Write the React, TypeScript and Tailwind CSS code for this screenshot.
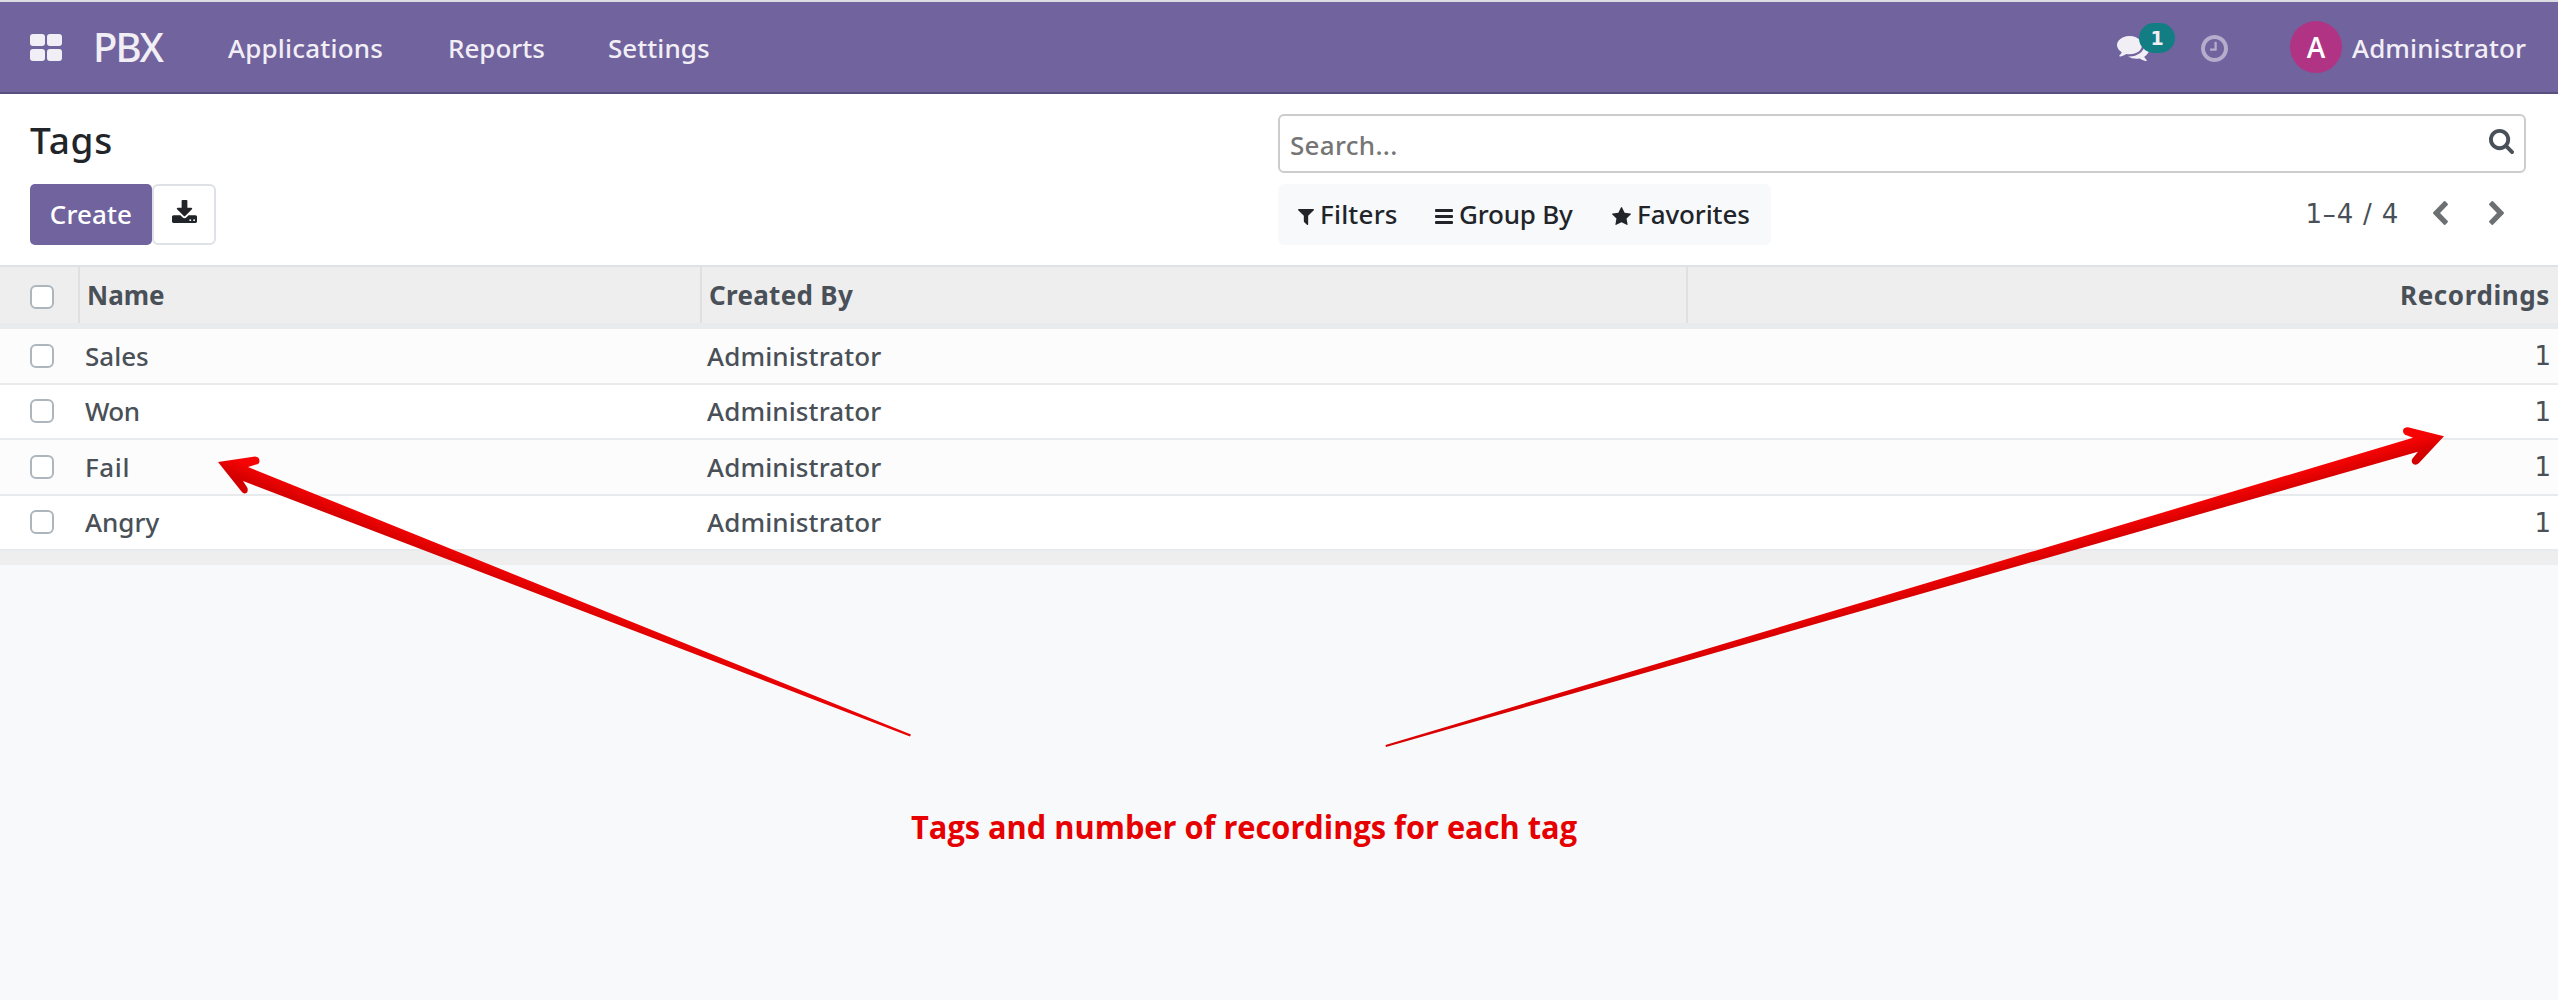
import type { ReactNode } from "react";

type IconProps = { box: string; d: string; className: string };

function Icon({ box, d, className }: IconProps) {
  return (
    <svg viewBox={box} preserveAspectRatio="none" fill="currentColor" className={`block shrink-0 ${className}`}>
      <path d={d} />
    </svg>
  );
}

const COMMENTS =
  "M1408 768q0 139-94 257t-256.5 186.5-353.5 68.5q-86 0-176-16-124 88-278 128-36 9-86 16h-3q-11 0-20.5-8t-11.5-21q-1-3-1-6.5t.5-6.5 2-6l2.5-5 3.5-5.5 4-5 4.5-5 4-4.5q5-6 23-25t26-29.5 22.5-29 25-38.5 20.5-44q-124-72-195-177t-71-224q0-139 94-257t256.5-186.5 353.5-68.5 353.5 68.5 256.5 186.5 94 257zm384 256q0 120-71 224.5t-195 176.5q10 24 20.5 44t25 38.5 22.5 29 26 29.5 23 25q1 1 4 4.5t4.5 5 4 5 3.5 5.5l2.5 5 2 6 .5 6.5-1 6.5q-3 14-13 22t-22 7q-50-7-86-16-154-40-278-128-90 16-176 16-271 0-472-132 58 4 88 4 161 0 309-45t264-129q125-92 192-212t67-254q0-77-23-152 129 71 204 178t75 230z";
const CLOCK =
  "M1024 544v448q0 14-9 23t-23 9h-320q-14 0-23-9t-9-23v-64q0-14 9-23t23-9h224v-352q0-14 9-23t23-9h64q14 0 23 9t9 23zm416 352q0-148-73-273t-198-198-273-73-273 73-198 198-73 273 73 273 198 198 273 73 273-73 198-198 73-273zm224 0q0 209-103 385.5t-279.5 279.5-385.5 103-385.5-103-279.5-279.5-103-385.5 103-385.5 279.5-279.5 385.5-103 385.5 103 279.5 279.5 103 385.5z";
const SEARCH =
  "M1216 832q0-185-131.5-316.5t-316.5-131.5-316.5 131.5-131.5 316.5 131.5 316.5 316.5 131.5 316.5-131.5 131.5-316.5zm512 832q0 52-38 90t-90 38q-54 0-90-38l-343-342q-179 124-399 124-143 0-273.5-55.5t-225-150-150-225-55.5-273.5 55.5-273.5 150-225 225-150 273.5-55.5 273.5 55.5 225 150 150 225 55.5 273.5q0 220-124 399l343 343q37 37 37 90z";
const DOWNLOAD =
  "M1344 1344q0-26-19-45t-45-19-45 19-19 45 19 45 45 19 45-19 19-45zm256 0q0-26-19-45t-45-19-45 19-19 45 19 45 45 19 45-19 19-45zm128-224v320q0 40-28 68t-68 28h-1472q-40 0-68-28t-28-68v-320q0-40 28-68t68-28h465l135 136q58 56 136 56t136-56l136-136h464q40 0 68 28t28 68zm-325-569q17 41-14 70l-448 448q-18 19-45 19t-45-19l-448-448q-31-29-14-70 17-39 59-39h256v-448q0-26 19-45t45-19h256q26 0 45 19t19 45v448h256q42 0 59 39z";
const FILTER =
  "M1595 295q17 41-14 70l-493 493v742q0 42-39 59-13 5-25 5-27 0-45-19l-256-256q-19-19-19-45v-486l-493-493q-31-29-14-70 17-39 59-39h1280q42 0 59 39z";
const STAR =
  "M1728 647q0 22-26 48l-363 354 86 500q1 7 1 20 0 21-10.5 35.5t-30.5 14.5q-19 0-40-12l-449-236-449 236q-22 12-40 12-21 0-31.5-14.5t-10.5-35.5q0-6 2-20l86-500-364-354q-25-27-25-48 0-37 56-46l502-73 225-455q19-41 49-41t49 41l225 455 502 73q56 9 56 46z";
const CHEVRON_LEFT =
  "M1427 301l-531 531 531 531q19 19 19 45t-19 45l-166 166q-19 19-45 19t-45-19l-742-742q-19-19-19-45t19-45l742-742q19-19 45-19t45 19l166 166q19 19 19 45t-19 45z";
const CHEVRON_RIGHT =
  "M1363 877l-742 742q-19 19-45 19t-45-19l-166-166q-19-19-19-45t19-45l531-531-531-531q-19-19-19-45t19-45l166-166q19-19 45-19t45 19l742 742q19 19 19 45t-19 45z";

function Navbar() {
  return (
    <header className="flex h-[94px] items-center border-t-2 border-b-2 border-t-[#dcdce3] border-b-[#5a4f7f] bg-[#71639e] pr-8 pl-[30px] text-[#f1eff5]">
      <div className="grid grid-cols-[15px_15px] grid-rows-[12px_12px] gap-x-[2px] gap-y-[3px]">
        <i className="rounded-[3px] bg-[#f1eff5]" />
        <i className="rounded-[3px] bg-[#f1eff5]" />
        <i className="rounded-[3px] bg-[#f1eff5]" />
        <i className="rounded-[3px] bg-[#f1eff5]" />
      </div>
      <div className="ml-[31px] w-[135px] text-[40px] leading-[60px] tracking-[-2px]">PBX</div>
      <nav className="flex pt-px">
        <a className="w-[220px] tracking-[0.2px]">Applications</a>
        <a className="w-[160px]">Reports</a>
        <a className="tracking-[0.05px]">Settings</a>
      </nav>
      <div className="ml-auto flex items-center">
        <div className="relative mr-[52px]">
          <Icon box="0 256 1792 1408" d={COMMENTS} className="mt-[3px] h-[25px] w-8" />
          <span className="absolute -top-[10px] left-[22px] flex h-[30px] w-9 items-center justify-center rounded-full bg-[#127e84] font-['DejaVu_Sans'] text-[19px] leading-none font-bold">
            1
          </span>
        </div>
        <Icon box="128 128 1536 1536" d={CLOCK} className="mt-0.5 mr-[62px] h-[27px] w-[27px] text-[#b5adcb]" />
        <div className="flex h-[52px] w-[52px] items-center justify-center rounded-full bg-[#b13383] font-['Open_Sans'] text-[28px] font-semibold text-white">
          A
        </div>
        <span className="ml-[10px] pt-px tracking-[0.08px]">Administrator</span>
      </div>
    </header>
  );
}

function SearchOption({ icon, children, className }: { icon: ReactNode; children: ReactNode; className: string }) {
  return (
    <button className={`flex items-center whitespace-nowrap text-[#212529] ${className}`}>
      {icon}
      <span className="-mt-px">{children}</span>
    </button>
  );
}

function ControlPanel() {
  return (
    <section className="flex h-[171px] bg-white pt-5 pr-8 pl-[30px]">
      <div className="w-[1248px]">
        <h1 className="h-[70px] text-[37px] leading-[51px] tracking-[0.8px] text-[#212529]">Tags</h1>
        <div className="flex">
          <button className="h-[61px] w-[122px] rounded-[5px] bg-[#71639e] pb-[2px] tracking-[0.1px] text-white">
            Create
          </button>
          <button className="flex h-[61px] w-16 items-center justify-center rounded-[6px] border-2 border-[#dee2e6] text-[#212529]">
            <Icon box="64 0 1664 1536" d={DOWNLOAD} className="-mt-1.5 h-[23px] w-[25px]" />
          </button>
        </div>
      </div>
      <div className="flex-1">
        <div className="flex h-[59px] items-center justify-between rounded-[6px] border-2 border-[#ccc] pr-[10px] pl-[10px]">
          <span className="pt-[3px] tracking-[0.3px] text-[#757575]">Search...</span>
          <Icon box="64 128 1664 1664" d={SEARCH} className="-mt-1 h-[25px] w-[25px] text-[#495057]" />
        </div>
        <div className="mt-[11px] flex items-center justify-between">
          <div className="flex h-[61px] w-[493px] items-center rounded-[6px] bg-[#f8f9fb] pl-5">
            <SearchOption
              className="w-[137px] tracking-[0.2px]"
              icon={<Icon box="191 256 1410 1408" d={FILTER} className="mt-1 mr-[6px] h-4 w-4" />}
            >
              Filters
            </SearchOption>
            <SearchOption
              className="w-[177px] tracking-[-0.2px]"
              icon={
                <span className="mt-[3px] mr-[6px] flex w-[18px] flex-col gap-[3px]">
                  <i className="h-[3px] rounded-[1px] bg-[#212529]" />
                  <i className="h-[3px] rounded-[1px] bg-[#212529]" />
                  <i className="h-[3px] rounded-[1px] bg-[#212529]" />
                </span>
              }
            >
              Group By
            </SearchOption>
            <SearchOption
              className="tracking-[-0.1px]"
              icon={<Icon box="64 32 1664 1587" d={STAR} className="mt-[3px] mr-[6px] h-[18px] w-[19px]" />}
            >
              Favorites
            </SearchOption>
          </div>
          <div className="flex items-center pr-[22px] text-[#6c7073]">
            <span className="mr-[34px] -mt-[2px] font-['DejaVu_Sans'] font-normal tracking-[0.8px] text-[#495057]">
              1–4 / 4
            </span>
            <Icon box="410 26 1036 1612" d={CHEVRON_LEFT} className="-mt-[3px] mr-[41px] h-6 w-[15px]" />
            <Icon box="346 26 1036 1612" d={CHEVRON_RIGHT} className="-mt-[3px] h-6 w-[15px]" />
          </div>
        </div>
      </div>
    </section>
  );
}

function Checkbox() {
  return <span className="ml-[30px] block h-6 w-6 rounded-[6px] border-2 border-[#adb5bd] bg-white" />;
}

const rows = [
  { name: "Sales", by: "Administrator", count: 1, style: "h-14 bg-[#fcfcfc]", text: "tracking-[0px]" },
  { name: "Won", by: "Administrator", count: 1, style: "h-[55px] bg-white", text: "tracking-[-0.6px]" },
  { name: "Fail", by: "Administrator", count: 1, style: "h-14 bg-[#fcfcfc]", text: "tracking-[0.6px]" },
  { name: "Angry", by: "Administrator", count: 1, style: "h-[55px] bg-white", text: "tracking-[0px]" },
];

function TagTable() {
  return (
    <section className="text-[#495057]">
      <div className="grid h-16 grid-cols-[78px_622px_986px_1fr] border-t-2 border-b-[6px] border-t-[#dee2e6] border-b-[#e7ebee] bg-[#eeeeee] font-bold">
        <div className="flex items-center pt-[3px]">
          <Checkbox />
        </div>
        <div className="flex items-center border-l-2 border-[#dee0e1] pl-[7px]">Name</div>
        <div className="flex items-center border-l-2 border-[#dee0e1] pl-[7px] tracking-[0.3px]">Created By</div>
        <div className="flex items-center justify-end border-l-2 border-[#dee0e1] pr-2 tracking-[0.6px]">
          Recordings
        </div>
      </div>
      {rows.map((row) => (
        <div
          key={row.name}
          className={`grid grid-cols-[78px_629px_1fr_auto] items-center border-b-2 border-[#e7ebee] ${row.style}`}
        >
          <div className="pb-px">
            <Checkbox />
          </div>
          <span className={`pb-px pl-[7px] ${row.text}`}>{row.name}</span>
          <span className="pb-px tracking-[0.12px]">{row.by}</span>
          <span className="pr-[7px] font-['DejaVu_Sans'] font-normal">{row.count}</span>
        </div>
      ))}
      <div className="h-[14px] bg-[#eeeeee]" />
    </section>
  );
}

function Annotations() {
  return (
    <>
      <svg viewBox="0 0 2558 1000" className="pointer-events-none absolute top-0 left-0 h-[1000px] w-[2558px]">
        <defs>
          <linearGradient id="left" gradientUnits="userSpaceOnUse" x1="383" y1="518" x2="377" y2="533">
            <stop offset="0" stopColor="#f60404" />
            <stop offset="1" stopColor="#d40000" />
          </linearGradient>
          <linearGradient id="right" gradientUnits="userSpaceOnUse" x1="2257" y1="484" x2="2261" y2="498">
            <stop offset="0" stopColor="#f60404" />
            <stop offset="1" stopColor="#d40000" />
          </linearGradient>
        </defs>
        <path
          fill="url(#left)"
          d="M218 462L255 456.600Q259.500 457 259.500 461Q259.500 464 256 464.600L248 467L911 734.500L910 736.500L243 481L247.500 488Q248.500 493 245 493.400Q243 493.500 241.500 491.500Z"
        />
        <path
          fill="url(#right)"
          d="M2444 436.300L2408 427.300Q2403 427.300 2403 431Q2403 433.500 2405 434.700L2413 437.700L1385.500 745L1386 747L2418 451.700L2412.500 458.500Q2410.500 462 2413.500 464.300Q2416.500 465.500 2419 463Z"
        />
      </svg>
      <p className="absolute top-[805px] left-[911px] origin-left scale-x-[0.961] font-['Open_Sans'] text-[32px] leading-[44px] font-bold whitespace-nowrap text-[#e60000]">
        Tags and number of recordings for each tag
      </p>
    </>
  );
}

export default function App() {
  return (
    <main className="relative h-[1000px] w-[2558px] overflow-hidden bg-[#f8f9fb] font-['Noto_Sans',sans-serif] text-[26px] leading-[36px] font-medium">
      <Navbar />
      <ControlPanel />
      <TagTable />
      <Annotations />
    </main>
  );
}
